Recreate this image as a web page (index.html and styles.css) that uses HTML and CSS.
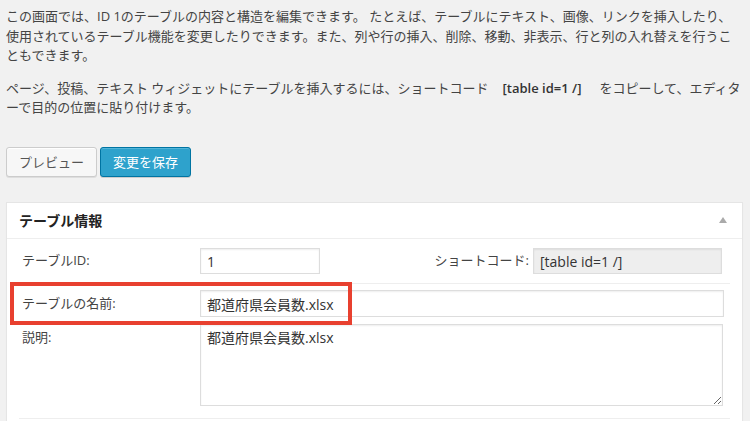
FILE: index.html
```html
<!DOCTYPE html>
<html lang="ja">
<head>
	<meta charset="utf8">
	<meta name="viewport" content="width=device-width">
	<title>テーブルの編集</title>
	<link rel="stylesheet" href="styles.css">
</head>
<body>
	<div class="wrap">
		<p class="intro">この画面では、ID 1のテーブルの内容と構造を編集できます。 たとえば、テーブルにテキスト、画像、リンクを挿入したり、使用されているテーブル機能を変更したりできます。また、列や行の挿入、削除、移動、非表示、行と列の入れ替えを行うこともできます。</p>
		<p>ページ、投稿、テキスト ウィジェットにテーブルを挿入するには、ショートコード<span class="shortcode-inline">[table id=1 /]</span>をコピーして、エディターで目的の位置に貼り付けます。</p>

		<div class="actions">
			<button type="button" class="button">プレビュー</button>
			<button type="button" class="button button-primary">変更を保存</button>
		</div>

		<div class="postbox">
			<div class="hndle">
				<h3>テーブル情報</h3>
				<span class="toggle-arrow"></span>
			</div>
			<div class="inside">
				<div class="row row-id">
					<label for="table-id">テーブルID:</label>
					<input type="text" id="table-id" value="1">
					<label for="table-shortcode" class="shortcode-label">ショートコード:</label>
					<input type="text" id="table-shortcode" class="shortcode" value="[table id=1 /]" readonly>
				</div>
				<div class="row row-name">
					<label for="table-name">テーブルの名前:</label>
					<input type="text" id="table-name" value="都道府県会員数.xlsx">
					<span class="highlight"></span>
				</div>
				<div class="row row-desc">
					<label for="table-description">説明:</label>
					<textarea id="table-description">都道府県会員数.xlsx</textarea>
				</div>
			</div>
		</div>
	</div>
</body>
</html>
```

FILE: styles.css
```css
html, body {
	margin: 0;
	padding: 0;
	overflow: hidden;
}
body {
	background: #f1f1f1;
	color: #444;
	font-family: "Open Sans", "Noto Sans CJK JP", sans-serif;
	font-size: 13px;
	line-height: 1.5;
}

.wrap {
	padding: 7px 5px 0 6px;
}
.wrap > p {
	margin: 0 0 13px;
	line-break: loose;
}
.wrap > p.intro {
	margin-right: 4px;
}
.shortcode-inline {
	font-weight: 600;
	color: #333;
	margin: 0 18px 0 14px;
}

/* Buttons */
.actions {
	display: flex;
	gap: 3px;
	margin: 29px 0 25px;
}
.button {
	height: 30px;
	padding: 0 12px 2px;
	font-family: inherit;
	font-size: 13px;
	line-height: 28px;
	border-radius: 3px;
	border: 1px solid #ccc;
	background: #f7f7f7;
	color: #555;
	box-shadow: inset 0 1px 0 #fff, 0 1px 0 rgba(0, 0, 0, .08);
	cursor: pointer;
}
.button-primary {
	background: #2ea2cc;
	border-color: #0074a2;
	color: #fff;
	box-shadow: inset 0 1px 0 rgba(120, 200, 230, .5), 0 1px 0 rgba(0, 0, 0, .15);
}

/* Postbox */
.postbox {
	margin-right: 2px;
	background: #fff;
	border: 1px solid #e5e5e5;
	box-shadow: 0 1px 1px rgba(0, 0, 0, .04);
}
.hndle {
	display: flex;
	align-items: center;
	border-bottom: 1px solid #eee;
}
.hndle h3 {
	flex: 1;
	margin: 0;
	padding: 8px 12px;
	font-size: 14px;
	line-height: 1.4;
	color: #222;
}
.toggle-arrow {
	width: 0;
	height: 0;
	margin-right: 15px;
	border-left: 4px solid transparent;
	border-right: 4px solid transparent;
	border-bottom: 6px solid #aaa;
}
.inside {
	padding: 0 12px 12px;
}

.row {
	display: grid;
	align-items: center;
}
.row label {
	color: #444;
}
.row input,
.row textarea {
	box-sizing: border-box;
	margin: 0;
	padding: 2px 6px;
	font-family: inherit;
	font-size: 14px;
	line-height: 1.4;
	color: #333;
	background: #fff;
	border: 1px solid #ddd;
	box-shadow: inset 0 1px 2px rgba(0, 0, 0, .07);
	outline: none;
}
.row-id {
	grid-template-columns: 178px 120px 1fr 189px;
	padding: 9px 8px 9px 3px;
	border-bottom: 1px solid #eee;
}
.row-id input {
	height: 26px;
}
.shortcode-label {
	text-align: right;
	margin-right: 4px;
}
.row input.shortcode {
	background: #eee;
}
.row-name {
	position: relative;
	grid-template-columns: 178px 1fr;
	padding: 6px 6px 0 3px;
}
.row-name input {
	height: 27px;
}
.row-desc {
	grid-template-columns: 178px 1fr;
	align-items: start;
	padding: 7px 7px 12px 3px;
	border-bottom: 1px solid #eee;
}
.row-desc label {
	padding-top: 4px;
}
.row-desc textarea {
	height: 82px;
	padding-top: 3px;
	resize: vertical;
}

/* Annotation drawn over the name row */
.highlight {
	position: absolute;
	left: -9px;
	top: -2px;
	width: 342px;
	height: 43px;
	box-sizing: border-box;
	border: 4px solid #e8402f;
	pointer-events: none;
}
```
